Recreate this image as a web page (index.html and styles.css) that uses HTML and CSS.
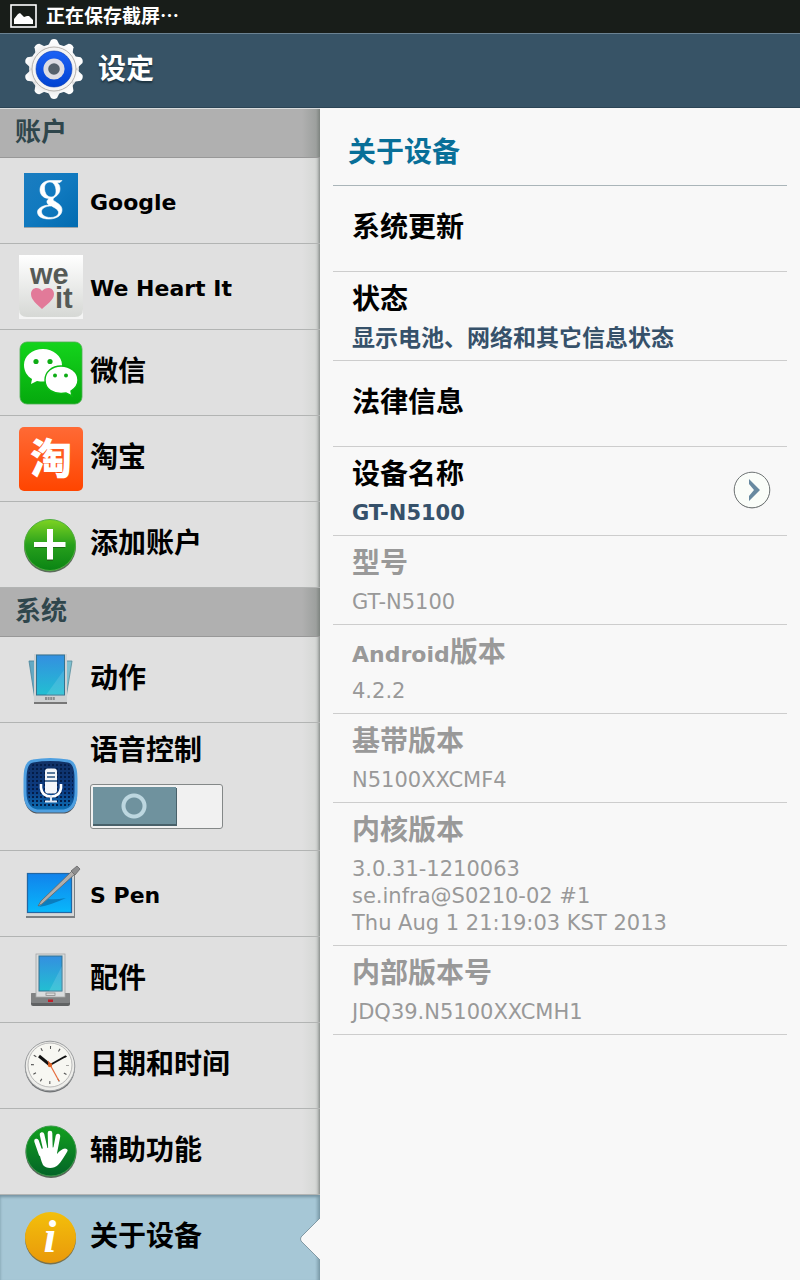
FILE: index.html
```html
<!DOCTYPE html>
<html lang="zh-CN">
<head>
<meta charset="utf-8">
<meta name="viewport" content="width=device-width, initial-scale=1">
<title>设定</title>
<link rel="stylesheet" href="styles.css">
</head>
<body>
<div class="status">
  <svg class="status-icon" viewBox="0 0 27 24" aria-hidden="true"><rect x="1" y="1" width="25" height="22" fill="none" stroke="#fff" stroke-width="1.6"/><path d="M4 20V15L8 10L10 9L14 13L17 12L19 12L23 16V20Z" fill="#fff"/></svg>
  <span>正在保存截屏…</span>
</div>
<header class="topbar">
  <svg class="gear" viewBox="0 0 64 64" aria-hidden="true">
    <defs>
      <linearGradient id="metal" x1="0" y1="0" x2="0" y2="1"><stop offset="0" stop-color="#fff"/><stop offset=".45" stop-color="#e9e9ea"/><stop offset=".6" stop-color="#c9c9cb"/><stop offset="1" stop-color="#fff"/></linearGradient>
      <linearGradient id="blue" x1="0" y1="0" x2="0" y2="1"><stop offset="0" stop-color="#1c62f5"/><stop offset="1" stop-color="#0043d2"/></linearGradient>
    </defs>
    <g fill="url(#metal)">
      <circle cx="32" cy="32" r="25"/>
      <path id="tooth" d="M26 9L29 3Q32 1 35 3L38 9V55L35 61Q32 63 29 61L26 55Z"/>
      <use href="#tooth" transform="rotate(36 32 32)"/><use href="#tooth" transform="rotate(72 32 32)"/><use href="#tooth" transform="rotate(108 32 32)"/><use href="#tooth" transform="rotate(144 32 32)"/>
    </g>
    <circle cx="32" cy="32" r="22" fill="#f4f4f4" stroke="#a5a09a" stroke-width=".8"/>
    <circle cx="32" cy="32" r="18" fill="url(#blue)" stroke="#0a3bb0" stroke-width=".6"/>
    <circle cx="32" cy="32" r="8.200" fill="#54616b" stroke="#dcdde3" stroke-width="4.800"/>
  </svg>
  <h1>设定</h1>
</header>
<div class="panes">
  <nav class="sidebar" aria-label="设定">
    <h2 class="section">账户</h2>
    <a class="row" href="#google">
      <svg class="icon" viewBox="0 0 64 64" aria-hidden="true"><defs><linearGradient id="gg" x1="0" y1="0" x2="1" y2="1"><stop offset="0" stop-color="#1b7dc0"/><stop offset=".5" stop-color="#1079bf"/><stop offset="1" stop-color="#026bb0"/></linearGradient></defs><rect x="5" y="5" width="54" height="54" fill="#9aa4aa"/><rect x="5" y="4" width="54" height="54" fill="url(#gg)"/><path fill="#fff" stroke="#fff" stroke-width=".6" fill-rule="evenodd" d="M43 11.500H31C24 12 21 16 21 21C21 26 25 29.500 30 29.500C27 32 27.500 34 30 36C23 36.500 18.500 39.500 18.500 43C18.500 47.500 23 50 30 50C38 50 43 46 43 41C43 37 40 35 36 32.500C33.500 31 33.500 30 36 28C39 26 41 23.500 41 20C41 17 40 15 38 13.500H41ZM31 13C35 13 37 17.500 37 22C37 26 35 28 32 28C28 28 25.500 24 25.500 19C25.500 15 28 13 31 13ZM32.500 37C37 39.500 39.500 41 39.500 43.500C39.500 46.500 36 48.500 31.500 48.500C26 48.500 22.500 46 22.500 42.500C22.500 39 27 37 32.500 37Z"/></svg>
      <span class="latin">Google</span>
    </a>
    <a class="row" href="#weheartit">
      <svg class="icon" viewBox="0 0 64 64" aria-hidden="true"><defs><linearGradient id="wh" x1="0" y1="0" x2="0" y2="1"><stop offset="0" stop-color="#fff"/><stop offset="1" stop-color="#d6d8d5"/></linearGradient></defs><rect width="64" height="64" fill="#f4f4f4"/><path d="M0 0H64V54Q64 62 56 62H8Q0 62 0 54Z" fill="url(#wh)"/><text class="whi"><tspan x="11" y="29">we</tspan><tspan x="36" y="53">it</tspan></text><path d="M23 54C18 49 12 45 12 39C12 32 20 31 23 36C27 31 35 32 35 39C35 45 28 49 23 54Z" fill="#e27a99"/></svg>
      <span class="latin">We Heart It</span>
    </a>
    <a class="row" href="#weixin">
      <svg class="icon" viewBox="0 0 64 64" aria-hidden="true"><defs><linearGradient id="wx" x1="0" y1="0" x2="0" y2="1"><stop offset="0" stop-color="#14d41c"/><stop offset="1" stop-color="#05a90d"/></linearGradient></defs><rect x="1" y="1" width="62" height="62" rx="7" fill="url(#wx)" stroke="#4caf50" stroke-width=".8"/><path d="M24 8C13 8 5 15 5 24C5 30 8 35 13 38L12 43L18 40C34 43 43 34 43 24C43 15 34 8 24 8Z" fill="#fff"/><path d="M42 25C33 25 26 31 26 39C26 48 34 54 47 52L53 55L52 50C57 47 59 43 59 39C59 31 51 25 42 25Z" fill="#fff" stroke="#0aba12" stroke-width="1.4"/><g fill="#0dac14"><circle cx="17" cy="20.500" r="2.600"/><circle cx="31" cy="20.500" r="2.600"/><circle cx="36" cy="34.500" r="2"/><circle cx="47" cy="34.500" r="2"/></g></svg>
      <span>微信</span>
    </a>
    <a class="row" href="#taobao">
      <svg class="icon" viewBox="0 0 64 64" aria-hidden="true"><defs><linearGradient id="tb" x1="0" y1="0" x2="0" y2="1"><stop offset="0" stop-color="#ff6a35"/><stop offset="1" stop-color="#ff4500"/></linearGradient></defs><rect width="64" height="64" rx="5" fill="url(#tb)"/><text class="tao" x="32" y="47" text-anchor="middle">淘</text></svg>
      <span>淘宝</span>
    </a>
    <a class="row" href="#add">
      <svg class="icon" viewBox="0 0 64 64" aria-hidden="true"><defs><linearGradient id="ad" x1="0" y1="0" x2="0" y2="1"><stop offset="0" stop-color="#7ed321"/><stop offset=".5" stop-color="#27a01c"/><stop offset="1" stop-color="#0a8414"/></linearGradient></defs><circle cx="31" cy="33.500" r="26" fill="#5c6d5c"/><circle cx="31" cy="32" r="25.500" fill="url(#ad)" stroke="#51ae42" stroke-width="1"/><path d="M28 18V30H16V35H28V48H34V35H46V30H34V18Z" fill="#1c6b14"/><path d="M28 16V29H15V34H28V46.500H34V34H46.500V29H34V16Z" fill="#fff"/></svg>
      <span>添加账户</span>
    </a>
    <h2 class="section">系统</h2>
    <a class="row" href="#motion">
      <svg class="icon" viewBox="0 0 64 64" aria-hidden="true"><defs><linearGradient id="scr" x1="0" y1="0" x2="0" y2="1"><stop offset="0" stop-color="#348fe0"/><stop offset="1" stop-color="#22bfd2"/></linearGradient></defs><path d="M9 12H16V54Z" fill="#d6dddf"/><path d="M10 13H16V52Z" fill="#63a9c4" stroke="#4e8499" stroke-width=".8"/><path d="M54.500 12H47L46 54Z" fill="#d6dddf"/><path d="M53 13H47V50Z" fill="#7dc0d0" stroke="#5a8b99" stroke-width=".8"/><rect x="15" y="8" width="33" height="48" fill="#777"/><rect x="15" y="6" width="33" height="48" fill="#cfd1d2"/><rect x="17.500" y="7" width="28" height="40" fill="url(#scr)" stroke="#35738f" stroke-width="1"/><path d="M45 22L27 47H45Z" fill="#fff" opacity=".12"/><path d="M26 50.500H36" stroke="#8b8d8e" stroke-width="3" stroke-dasharray="2 .6"/></svg>
      <span>动作</span>
    </a>
    <div class="row voice">
      <svg class="icon" viewBox="0 0 64 64" aria-hidden="true"><defs><linearGradient id="vb" x1="0" y1="0" x2="0" y2="1"><stop offset="0" stop-color="#123063"/><stop offset=".6" stop-color="#0b3c83"/><stop offset="1" stop-color="#0f74b8"/></linearGradient><pattern id="dots" width="4" height="4" patternUnits="userSpaceOnUse"><rect width="2" height="2" x="1" y="1" fill="#041d48"/></pattern></defs><path d="M13 6Q31 3 49 6Q58 7 58 24V38Q58 56 46 58.500H17Q5 56 5 38V24Q5 7 13 6Z" fill="#51565e"/><path d="M14 6Q31 3 49 6Q57 7 57 24V37Q57 54 45 56H18Q6 54 6 37V24Q6 7 14 6Z" fill="url(#vb)" stroke="#4e9fe0" stroke-width="3"/><path d="M16 8H47Q54 10 54 24V36Q54 51 45 53H18Q9 51 9 36V24Q9 10 16 8Z" fill="url(#dots)"/><rect x="26" y="13.500" width="12" height="25" rx="3" fill="#f3f6fa"/><path d="M28 18H36M28 22H36M26 26H38" stroke="#27517f" stroke-width="1.600"/><path d="M22 29V33Q23 41.500 32 41.500Q41 41.500 42 33V29" fill="none" stroke="#fff" stroke-width="2.600"/><path d="M32 41V46M26 46.500H38" stroke="#dbe6f3" stroke-width="2"/></svg>
      <div class="voice-body">
        <label for="voice">语音控制</label>
        <input class="switch" type="checkbox" role="switch" id="voice">
      </div>
    </div>
    <a class="row" href="#spen">
      <svg class="icon" viewBox="0 0 64 64" aria-hidden="true"><defs><linearGradient id="sp" x1="0" y1="0" x2="0" y2="1"><stop offset="0" stop-color="#1182ec"/><stop offset="1" stop-color="#08b8fb"/></linearGradient></defs><rect x="7" y="13" width="49" height="43" fill="#7d8184"/><rect x="7" y="11" width="48" height="43" fill="#d6d8d8"/><rect x="8.500" y="11.500" width="44" height="39" fill="url(#sp)" stroke="#2267a4" stroke-width="1.200"/><path d="M20 45Q32 43 47 36Q36 38 29 37Z" fill="#0a5f97" opacity=".6"/><path d="M19 44L22 39L53 9L56 12L23 42Z" fill="#b1aeac" stroke="#626466" stroke-width=".8"/><path d="M52 9L58 4L61 7L56 13Z" fill="#8e8e8f" stroke="#666" stroke-width=".8"/></svg>
      <span class="latin">S Pen</span>
    </a>
    <a class="row" href="#accessory">
      <svg class="icon" viewBox="0 0 64 64" aria-hidden="true"><rect x="12" y="45" width="39" height="13" rx="2" fill="#606263"/><rect x="12" y="45" width="39" height="10" rx="1" fill="#808283"/><rect x="17" y="6" width="29" height="43" fill="#dadcdd" stroke="#a6a8a9" stroke-width=".8"/><rect x="20" y="8" width="23" height="35" fill="url(#scr)" stroke="#35738f" stroke-width="1"/><path d="M43 18L30 43H43Z" fill="#fff" opacity=".13"/><rect x="27" y="45" width="9" height="2.500" fill="none" stroke="#8c8c8c" stroke-width=".8"/><rect x="29" y="51.500" width="5" height="2.500" fill="#be202b"/></svg>
      <span>配件</span>
    </a>
    <a class="row" href="#date">
      <svg class="icon" viewBox="0 0 64 64" aria-hidden="true"><circle cx="31" cy="33.500" r="25" fill="#707375"/><circle cx="31" cy="32" r="24.800" fill="#ededea" stroke="#9b9d9f" stroke-width="1"/><circle cx="31" cy="31" r="22" fill="#f7f7f2" stroke="#aaa" stroke-width=".8"/><circle cx="31" cy="31" r="17.500" fill="none" stroke="#555" stroke-width="3" stroke-dasharray="1.100 8.063" stroke-dashoffset=".55"/><path d="M31 31L20 22" stroke="#111" stroke-width="3"/><path d="M31 31L47 22" stroke="#111" stroke-width="2"/><path d="M29 27L40 47" stroke="#e66c3c" stroke-width="1.200"/><circle cx="31" cy="31" r="2.200" fill="#df6427"/></svg>
      <span>日期和时间</span>
    </a>
    <a class="row" href="#access">
      <svg class="icon" viewBox="0 0 64 64" aria-hidden="true"><defs><linearGradient id="hd" x1="0" y1="0" x2="0" y2="1"><stop offset="0" stop-color="#12a01e"/><stop offset="1" stop-color="#036428"/></linearGradient></defs><circle cx="32" cy="32.500" r="25.500" fill="#59685b"/><circle cx="32" cy="31" r="25" fill="url(#hd)" stroke="#3b9a4a" stroke-width="1"/><g stroke="#fff" stroke-linecap="round" stroke-width="4.600" fill="none"><path d="M17.500 21L22 34M23 14.500L27 32M31 13L31.500 32M39 16L35.500 34"/></g><path d="M19.500 29L38 27V34Q42 29 46 28.500Q50 29 48 32C45 37 42 42 39 45C35 49 27 49 24 45C22 41 21 36 19.500 29Z" fill="#fff"/></svg>
      <span>辅助功能</span>
    </a>
    <a class="row selected" href="#about" aria-current="page">
      <svg class="icon" viewBox="0 0 64 64" aria-hidden="true"><defs><linearGradient id="in" x1="0" y1="0" x2="0" y2="1"><stop offset="0" stop-color="#f3bf0b"/><stop offset="1" stop-color="#e9990b"/></linearGradient></defs><circle cx="31.500" cy="33" r="25.500" fill="#78724f"/><circle cx="31.500" cy="31.500" r="25.500" fill="url(#in)"/><text class="info" x="31" y="46" text-anchor="middle">i</text></svg>
      <span>关于设备</span>
      <svg class="notch" viewBox="0 0 20 42" aria-hidden="true"><path d="M20 0L1 19Q0 21 1 23L20 42Z" fill="#f8f8f8"/><path d="M20 0L1 19Q0 21 1 23L20 42" fill="none" stroke="#8199a4" stroke-width="1"/></svg>
    </a>
  </nav>
  <main class="detail">
    <h2 class="detail-title">关于设备</h2>
    <a class="item single" href="#update"><span class="name">系统更新</span></a>
    <a class="item" href="#state"><span class="name">状态</span><span class="summary">显示电池、网络和其它信息状态</span></a>
    <a class="item single" href="#legal"><span class="name">法律信息</span></a>
    <a class="item values with-arrow" href="#name"><span class="name">设备名称</span><span class="summary strong">GT-N5100</span>
      <svg class="arrow" viewBox="0 0 38 38" aria-hidden="true"><circle cx="19" cy="19.500" r="17.800" fill="#999"/><circle cx="19" cy="19" r="17.800" fill="#fafdf9" stroke="#6f7475" stroke-width="1"/><path d="M16 8L27 19L16 30V25L21 19L16 13Z" fill="#6889a0"/></svg>
    </a>
    <div class="item values off"><span class="name">型号</span><span class="summary">GT-N5100</span></div>
    <div class="item values off"><span class="name"><span class="latin">Android</span>版本</span><span class="summary">4.2.2</span></div>
    <div class="item values off"><span class="name">基带版本</span><span class="summary">N5100XXCMF4</span></div>
    <div class="item values off"><span class="name">内核版本</span><span class="summary">3.0.31-1210063<br>se.infra@S0210-02 #1<br>Thu Aug 1 21:19:03 KST 2013</span></div>
    <div class="item values off"><span class="name">内部版本号</span><span class="summary">JDQ39.N5100XXCMH1</span></div>
  </main>
</div>
</body>
</html>
```

FILE: styles.css
```css
* { box-sizing: border-box; }
body {
  margin: 0;
  min-height: 100vh;
  display: flex;
  flex-direction: column;
  background: #f8f8f8;
  color: #000;
  font-family: "Noto Sans CJK SC", "Noto Sans", sans-serif;
  font-size: 28px;
  font-weight: 700;
}
h1, h2 { margin: 0; }
a { color: inherit; text-decoration: none; }

.status {
  display: flex;
  align-items: center;
  gap: 9px;
  height: 33px;
  padding: 0 10px;
  background: #181d19;
  color: #fff;
  font-size: 19px;
  line-height: 28px;
}
.status span { padding-bottom: 4px; }
.status-icon { width: 27px; height: 24px; margin-bottom: 2px; }

.topbar {
  display: flex;
  align-items: center;
  gap: 12px;
  height: 75px;
  padding: 0 22px 4px;
  background: #375366;
  border-top: 1px solid #6b8292;
  border-bottom: 1px solid #2b4455;
  color: #fff;
}
.topbar h1 {
  padding-bottom: 4px;
  font-size: 28px;
  font-weight: 700;
  line-height: 40px;
  text-shadow: 0 2px 2px #1d3340;
}
.gear { width: 64px; height: 64px; }

.panes { display: flex; flex: 1; }
.sidebar {
  width: 40%;
  background: linear-gradient(to left, #8d928f 0, #c8cbc9 3px, #d6d8d6 5px, #e0e0e0 18px);
  border-top: 1px solid #d9dcdd;
}
.section {
  height: 49px;
  padding: 2px 15px;
  border-bottom: 1px solid #989898;
  background: linear-gradient(to left, #7d837f 0, #9da09e 4px, #b0b0b0 18px);
  color: #2f464c;
  font-size: 26px;
  line-height: 38px;
}
.row {
  display: flex;
  align-items: center;
  gap: 7px;
  height: 86px;
  padding: 0 19px;
  border-bottom: 1px solid #b2b4b3;
  line-height: 40px;
}
.row > span { padding-bottom: 8px; }
.row > .latin { padding: 4px 0 0; }
.latin { font-family: "DejaVu Sans", sans-serif; font-size: 22px; }
.icon { width: 64px; height: 64px; flex: none; overflow: visible; }
.whi { font: 700 29px "Liberation Sans", sans-serif; fill: #555a56; }
.tao { font: 900 42px "Noto Sans CJK SC", sans-serif; fill: #fff; }
.info { font: italic 700 46px "Liberation Serif", serif; fill: #fff; }

.voice { height: 128px; }
.voice-body { display: flex; flex-direction: column; gap: 16px; padding-bottom: 16px; }
.switch {
  appearance: none;
  width: 133px;
  height: 45px;
  margin: 0;
  border: 1px solid #848888;
  border-radius: 3px;
  background:
    radial-gradient(circle at 43px 21px, transparent 8px, #bdd7e0 9px, #bdd7e0 12px, transparent 13px),
    linear-gradient(#6f929e, #6f929e) 2px 2px / 83px 37px no-repeat,
    linear-gradient(#49616a, #49616a) 2px 3px / 84px 38px no-repeat,
    #f1f1f1;
}

.selected {
  position: relative;
  height: 85px;
  border-bottom: 0;
  background: linear-gradient(to left, #7f9fac 0, #a6c7d6 5px);
  box-shadow: inset 0 2px 3px #7594a2;
}
.notch {
  position: absolute;
  right: 0;
  top: 50%;
  width: 20px;
  height: 42px;
  margin-top: -20px;
}

.detail { flex: 1; padding: 0 13px; }
.detail-title {
  height: 78px;
  padding: 22px 15px 0;
  border-bottom: 1px solid #aab5b9;
  color: #086f98;
  font-size: 28px;
  line-height: 40px;
}
.item {
  display: grid;
  row-gap: 6px;
  padding: 5px 16px 10px 19px;
  border-bottom: 1px solid #cdcdcd;
}
.single { padding: 19px 19px 26px; }
.name { line-height: 40px; height: 40px; }
.summary { color: #36516a; font-size: 23px; line-height: 27px; }
.values { row-gap: 8px; padding-bottom: 8px; }
.values .summary { font-family: "DejaVu Sans", sans-serif; font-size: 21px; font-weight: 400; }
.values .strong { font-weight: 700; }
.off, .off .summary { color: #999; }
.with-arrow { grid-template-columns: 1fr 38px; align-items: center; }
.with-arrow .name, .with-arrow .summary { grid-column: 1; }
.arrow { grid-column: 2; grid-row: 1 / 3; width: 38px; height: 38px; }
```
